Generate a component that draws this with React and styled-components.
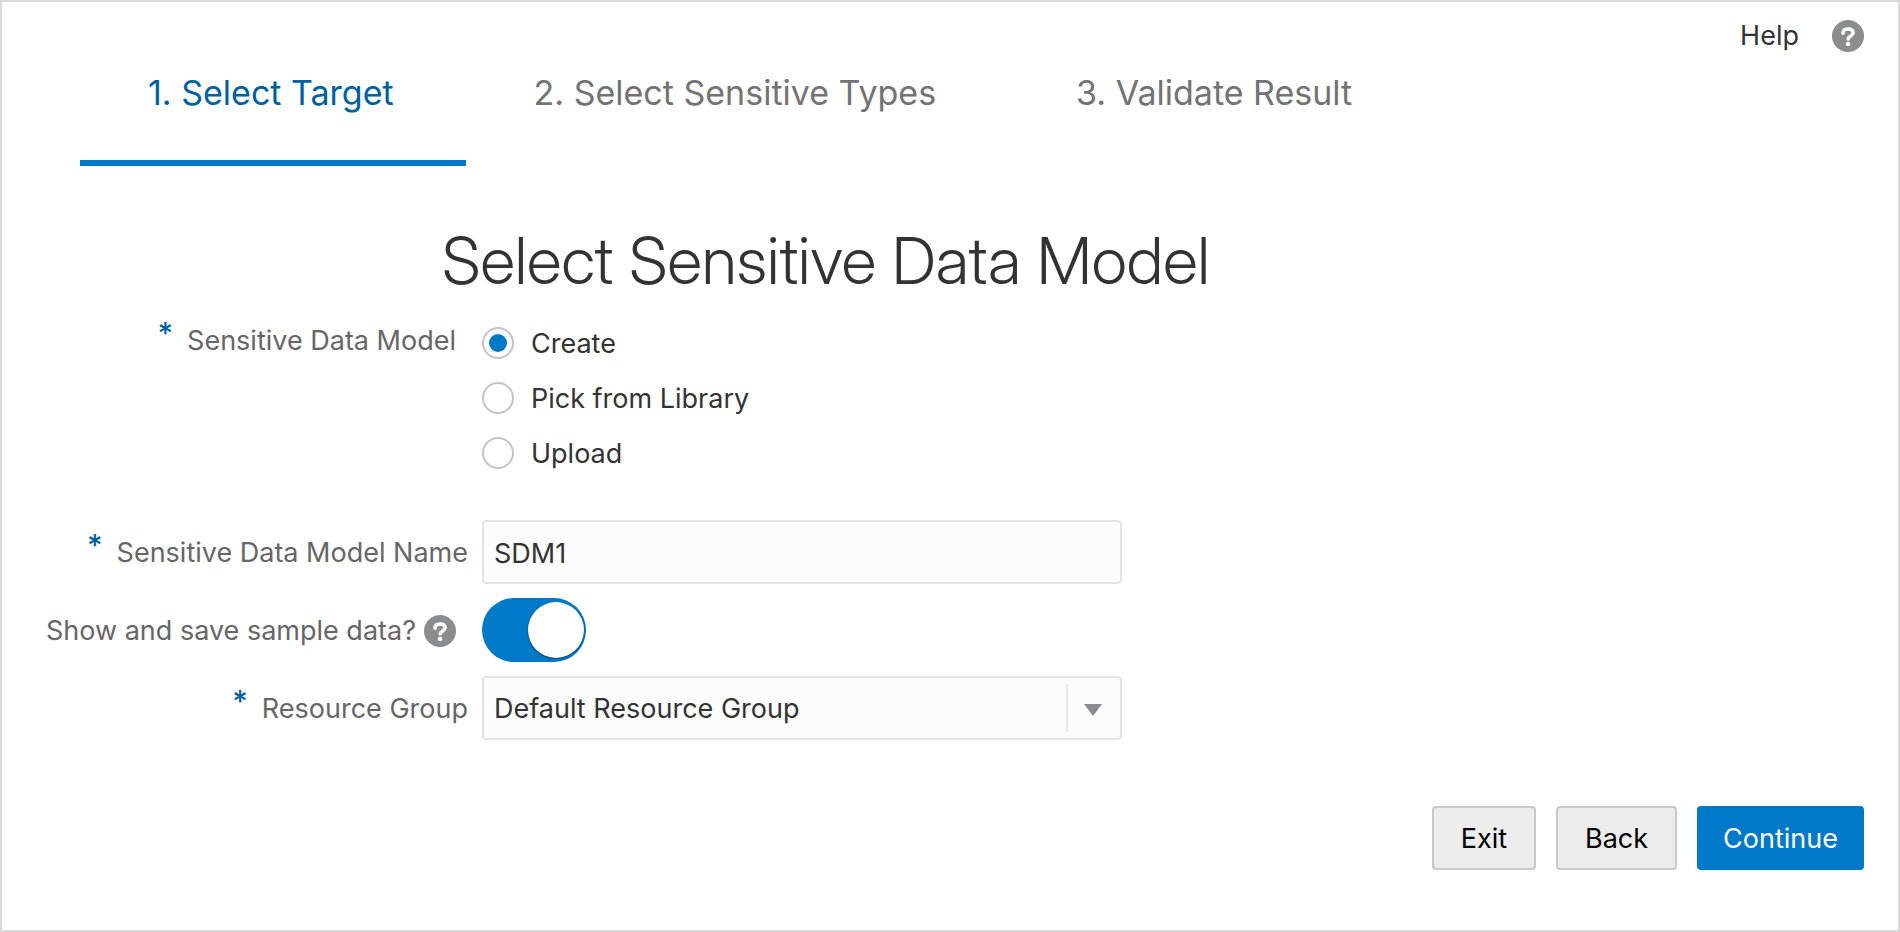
import React, { useState } from 'react';
import styled, { createGlobalStyle } from 'styled-components';

const GlobalStyle = createGlobalStyle`
  *, *::before, *::after { box-sizing: border-box; }
  body {
    margin: 0;
    background: #ffffff;
    color: #333333;
    font-family: Inter, "Liberation Sans", sans-serif;
    font-size: 27px;
    line-height: 34px;
  }
  button, input, select { font: inherit; color: inherit; margin: 0; }
`;

const Page = styled.div`
  display: flex;
  flex-direction: column;
  min-height: 100vh;
  border: 2px solid #d9d9d9;
`;

const Header = styled.header`
  display: flex;
  justify-content: space-between;
  align-items: flex-start;
  padding: 17px 34px 0 78px;
`;

const Steps = styled.nav`
  display: flex;
  padding-top: 52px;
`;

const Step = styled.a`
  padding: 0 72px 45px 68px;
  border-bottom: 6px solid ${(p) => (p.$active ? '#0079c9' : 'transparent')};
  color: ${(p) => (p.$active ? '#0061a0' : '#737373')};
  font-size: 34px;
  line-height: 44px;
  text-decoration: none;
  white-space: nowrap;
`;

const HelpLink = styled.a`
  display: flex;
  align-items: center;
  gap: 33px;
  color: #333333;
  text-decoration: none;
`;

const HelpGlyph = styled.svg`
  display: block;
  flex: none;
  width: 32px;
  height: 32px;
`;

const Title = styled.h1`
  margin: 0;
  padding: 55px 34px 0 440px;
  font-family: "Inter Display", Inter, "Liberation Sans", sans-serif;
  font-size: 65px;
  font-weight: 300;
  line-height: 80px;
`;

const Form = styled.form`
  display: flex;
  flex-direction: column;
  flex: 1;
`;

const Fields = styled.div`
  display: grid;
  grid-template-columns: 466px minmax(0, 640px);
  column-gap: 14px;
  row-gap: 14px;
  padding-top: 23px;
`;

const LabelCell = styled.div`
  display: flex;
  justify-content: flex-end;
  align-items: center;
  align-self: ${(p) => (p.$top ? 'start' : 'center')};
  gap: 8px;
  padding-top: ${(p) => (p.$top ? '0' : '2px')};
  padding-right: ${(p) => (p.$inset ? '12px' : '0')};
  color: #666666;
  white-space: nowrap;
`;

const Required = styled.span`
  align-self: flex-start;
  padding-right: 6px;
  color: #0061a0;
  font-size: 30px;
  font-weight: 500;
  line-height: 18px;
`;

const RadioGroup = styled.div`
  display: flex;
  flex-direction: column;
  gap: 21px;
  padding: 3px 0 35px;
`;

const RadioOption = styled.label`
  display: flex;
  align-items: center;
  gap: 17px;
`;

const Radio = styled.input`
  appearance: none;
  display: grid;
  place-items: center;
  width: 32px;
  height: 32px;
  border: 2px solid #c4c4c4;
  border-radius: 50%;
  background: #ffffff;

  && { margin-bottom: 2px; }

  &:checked::before {
    content: '';
    width: 18px;
    height: 18px;
    border-radius: 50%;
    background: #0079c9;
  }
`;

const TextBox = styled.input`
  width: 100%;
  height: 64px;
  padding: 2px 10px 0;
  border: 2px solid #e4e4e4;
  border-radius: 4px;
  background: #fcfcfc;
`;

const Switch = styled.input`
  appearance: none;
  display: flex;
  align-items: center;
  justify-content: ${(p) => (p.checked ? 'flex-end' : 'flex-start')};
  width: 104px;
  height: 64px;
  padding: 0 2px;
  border-radius: 32px;
  background: ${(p) => (p.checked ? '#0079c9' : '#c4c4c4')};

  &::before {
    content: '';
    width: 56px;
    height: 56px;
    border-radius: 50%;
    background: #ffffff;
    box-shadow: 0 1px 2px rgba(0, 0, 0, 0.5);
  }
`;

const SelectBox = styled.div`
  display: grid;
  align-items: center;

  > * { grid-area: 1 / 1; }
`;

const Select = styled.select`
  appearance: none;
  width: 100%;
  height: 64px;
  padding: 2px 66px 0 10px;
  border: 2px solid #e4e4e4;
  border-radius: 4px;
  background: #fcfcfc;
`;

const SelectArrow = styled.span`
  display: grid;
  place-items: center;
  justify-self: end;
  width: 56px;
  height: 48px;
  padding: 4px 4px 0 0;
  border-left: 2px solid #e4e4e4;
  pointer-events: none;
`;

const Actions = styled.footer`
  display: flex;
  justify-content: flex-end;
  gap: 20px;
  padding: 66px 34px 58px;
`;

const Button = styled.button`
  height: 64px;
  padding: 2px ${(p) => (p.$primary ? '24px' : '27px')} 0;
  border: 2px solid ${(p) => (p.$primary ? '#0079c9' : '#c9c9c9')};
  border-radius: 4px;
  background: ${(p) => (p.$primary ? '#0079c9' : '#ececec')};
  color: ${(p) => (p.$primary ? '#ffffff' : '#000000')};
`;

function HelpIcon() {
  return (
    <HelpGlyph viewBox="0 0 32 32" aria-hidden="true">
      <circle cx="16" cy="16" r="16" fill="#8b8c8e" />
      <path
        d="M11 13.2 C11 10.6 13 9 16.1 9 C19.2 9 21.1 10.5 21.1 12.8 C21.1 15.8 16.2 16 16.2 19"
        fill="none"
        stroke="#ffffff"
        strokeWidth="3.6"
        strokeLinecap="round"
      />
      <circle cx="16.1" cy="23.9" r="2.2" fill="#ffffff" />
    </HelpGlyph>
  );
}

const steps = ['1. Select Target', '2. Select Sensitive Types', '3. Validate Result'];
const sources = ['Create', 'Pick from Library', 'Upload'];

export default function App() {
  const [source, setSource] = useState('Create');
  const [name, setName] = useState('SDM1');
  const [sample, setSample] = useState(true);

  return (
    <Page>
      <GlobalStyle />
      <Header>
        <Steps aria-label="Steps">
          {steps.map((step, i) => (
            <Step key={step} href="#" $active={i === 0} aria-current={i === 0 ? 'step' : undefined}>
              {step}
            </Step>
          ))}
        </Steps>
        <HelpLink href="#">
          Help
          <HelpIcon />
        </HelpLink>
      </Header>
      <Title>Select Sensitive Data Model</Title>
      <Form onSubmit={(e) => e.preventDefault()}>
        <Fields>
          <LabelCell $top $inset>
            <Required>*</Required>
            <span id="source-label">Sensitive Data Model</span>
          </LabelCell>
          <RadioGroup role="radiogroup" aria-labelledby="source-label">
            {sources.map((option) => (
              <RadioOption key={option}>
                <Radio
                  type="radio"
                  name="source"
                  checked={source === option}
                  onChange={() => setSource(option)}
                />
                {option}
              </RadioOption>
            ))}
          </RadioGroup>

          <LabelCell>
            <Required>*</Required>
            <label htmlFor="model-name">Sensitive Data Model Name</label>
          </LabelCell>
          <TextBox id="model-name" value={name} onChange={(e) => setName(e.target.value)} />

          <LabelCell $inset>
            <label htmlFor="sample-data">Show and save sample data?</label>
            <HelpIcon />
          </LabelCell>
          <Switch
            id="sample-data"
            type="checkbox"
            role="switch"
            checked={sample}
            onChange={(e) => setSample(e.target.checked)}
          />

          <LabelCell>
            <Required>*</Required>
            <label htmlFor="resource-group">Resource Group</label>
          </LabelCell>
          <SelectBox>
            <Select id="resource-group">
              <option>Default Resource Group</option>
            </Select>
            <SelectArrow>
              <svg width="18" height="12" viewBox="0 0 18 12" aria-hidden="true">
                <path d="M0 0 H18 L9 12 Z" fill="#8b8c8e" />
              </svg>
            </SelectArrow>
          </SelectBox>
        </Fields>
        <Actions>
          <Button type="button">Exit</Button>
          <Button type="button">Back</Button>
          <Button type="submit" $primary>Continue</Button>
        </Actions>
      </Form>
    </Page>
  );
}
